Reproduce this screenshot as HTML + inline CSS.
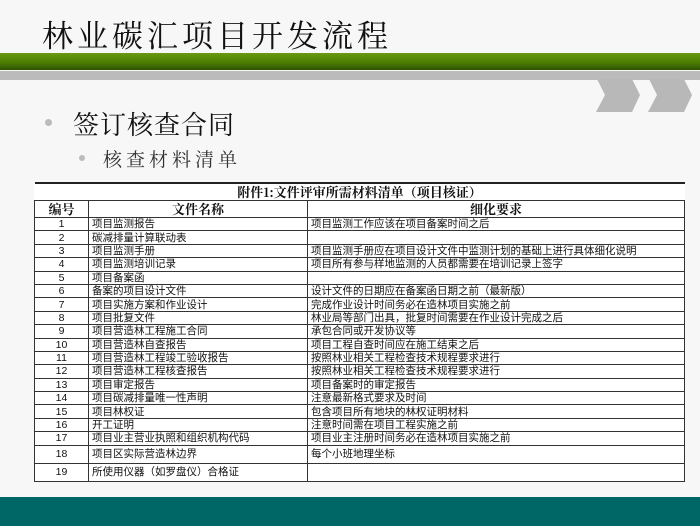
<!DOCTYPE html>
<html><head><meta charset="utf-8"><style>
body{margin:0;width:700px;height:526px;background:#f7f7f7;position:relative;overflow:hidden;font-family:"Liberation Sans","Noto Sans CJK SC",sans-serif}
.t{position:absolute;left:42px;top:11px;font-family:"Noto Serif CJK SC",serif;font-size:31px;letter-spacing:4px;color:#111}
.g{position:absolute;left:0;top:53px;width:700px;height:17px;background:linear-gradient(#6a9a10,#4a7a00 60%,#2e5200)}
.gr{position:absolute;left:0;top:71px;width:700px;height:9px;background:#bbb}
.b1{position:absolute;left:73px;top:105px;font-family:"Noto Serif CJK SC",serif;font-size:26px;letter-spacing:1px;color:#111}
.b2{position:absolute;left:103px;top:145px;font-family:"Noto Serif CJK SC",serif;font-size:19px;color:#333;letter-spacing:4px}
.d{position:absolute;border-radius:50%;background:#bbb}
table{position:absolute;left:34px;top:182px;width:651px;border-collapse:collapse;background:#fff;font-size:10.5px;color:#111}
td{border:1px solid #333;padding:0 3px;height:12.4px;line-height:12px;white-space:nowrap;overflow:hidden}
td:first-child{text-align:center}
.cap td{border-top:2px solid #222;border-left:none;border-right:none;height:16px;text-align:center;font-family:"Noto Serif CJK SC",serif;font-weight:bold;font-size:13px}
.h td{text-align:center;font-weight:bold;font-size:13px;height:16px;font-family:"Noto Serif CJK SC",serif}
.tall td{height:17px}
.teal{position:absolute;left:0;top:497px;width:700px;height:29px;background:#006666}
</style></head><body>
<div class="t">林业碳汇项目开发流程</div>
<div class="g"></div><div class="gr"></div>
<svg style="position:absolute;left:0;top:0" width="700" height="120"><polygon points="597,79 632,79 640,95 632,112 596,112 605,95" fill="#b8b8b8"/><polygon points="649,79 684,79 692,95 684,112 648,112 657,95" fill="#b8b8b8"/></svg>
<div class="d" style="left:45px;top:119px;width:7px;height:7px"></div>
<div class="b1">签订核查合同</div>
<div class="d" style="left:79px;top:155px;width:6px;height:6px"></div>
<div class="b2">核查材料清单</div>
<table>
<tr class="cap"><td colspan="3">附件1:文件评审所需材料清单（项目核证）</td></tr>
<tr class="h"><td style="width:47px">编号</td><td style="width:212px">文件名称</td><td>细化要求</td></tr>
<tr><td>1</td><td>项目监测报告</td><td>项目监测工作应该在项目备案时间之后</td></tr>
<tr><td>2</td><td>碳减排量计算联动表</td><td></td></tr>
<tr><td>3</td><td>项目监测手册</td><td>项目监测手册应在项目设计文件中监测计划的基础上进行具体细化说明</td></tr>
<tr><td>4</td><td>项目监测培训记录</td><td>项目所有参与样地监测的人员都需要在培训记录上签字</td></tr>
<tr><td>5</td><td>项目备案函</td><td></td></tr>
<tr><td>6</td><td>备案的项目设计文件</td><td>设计文件的日期应在备案函日期之前（最新版）</td></tr>
<tr><td>7</td><td>项目实施方案和作业设计</td><td>完成作业设计时间务必在造林项目实施之前</td></tr>
<tr><td>8</td><td>项目批复文件</td><td>林业局等部门出具，批复时间需要在作业设计完成之后</td></tr>
<tr><td>9</td><td>项目营造林工程施工合同</td><td>承包合同或开发协议等</td></tr>
<tr><td>10</td><td>项目营造林自查报告</td><td>项目工程自查时间应在施工结束之后</td></tr>
<tr><td>11</td><td>项目营造林工程竣工验收报告</td><td>按照林业相关工程检查技术规程要求进行</td></tr>
<tr><td>12</td><td>项目营造林工程核查报告</td><td>按照林业相关工程检查技术规程要求进行</td></tr>
<tr><td>13</td><td>项目审定报告</td><td>项目备案时的审定报告</td></tr>
<tr><td>14</td><td>项目碳减排量唯一性声明</td><td>注意最新格式要求及时间</td></tr>
<tr><td>15</td><td>项目林权证</td><td>包含项目所有地块的林权证明材料</td></tr>
<tr><td>16</td><td>开工证明</td><td>注意时间需在项目工程实施之前</td></tr>
<tr><td>17</td><td>项目业主营业执照和组织机构代码</td><td>项目业主注册时间务必在造林项目实施之前</td></tr>
<tr class="tall"><td>18</td><td>项目区实际营造林边界</td><td>每个小班地理坐标</td></tr>
<tr class="tall"><td>19</td><td>所使用仪器（如罗盘仪）合格证</td><td></td></tr>
</table>
<div class="teal"></div>
</body></html>
